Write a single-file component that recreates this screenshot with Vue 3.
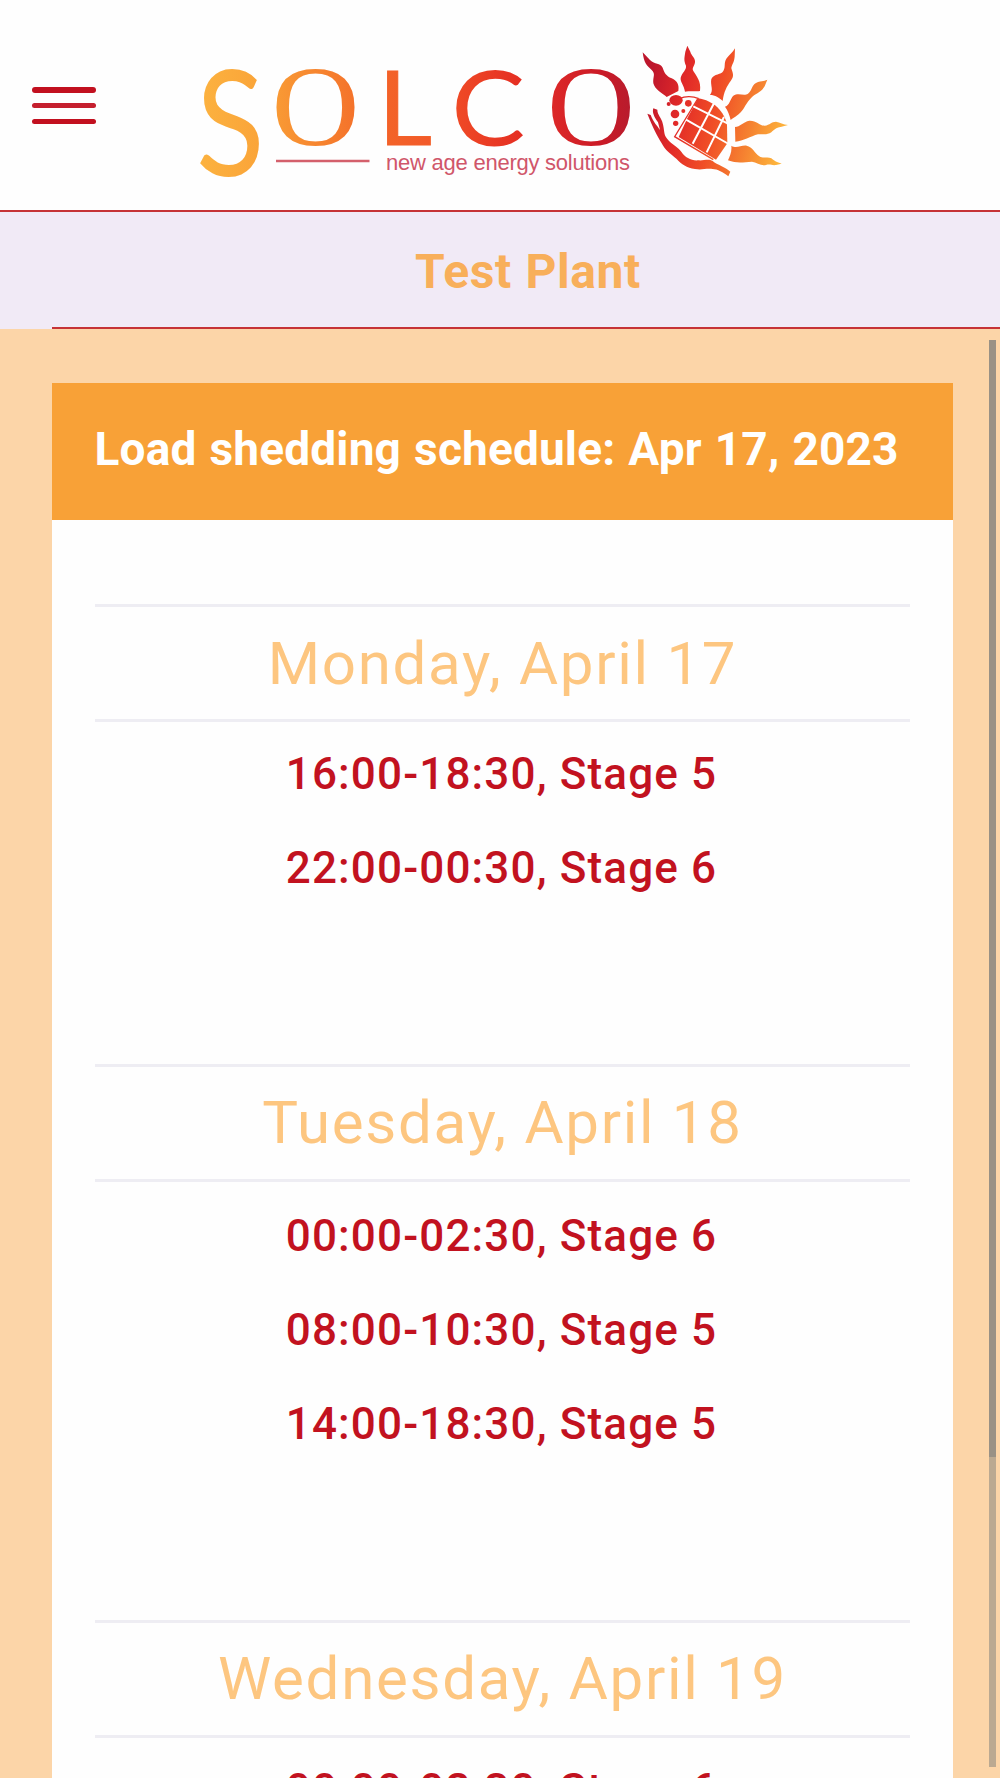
<script setup>
import { ref } from 'vue'

const plantName = ref('Test Plant')
const scheduleDate = ref('Apr 17, 2023')

const days = ref([
  {
    label: 'Monday, April 17',
    slots: ['16:00-18:30, Stage 5', '22:00-00:30, Stage 6']
  },
  {
    label: 'Tuesday, April 18',
    slots: ['00:00-02:30, Stage 6', '08:00-10:30, Stage 5', '14:00-18:30, Stage 5']
  },
  {
    label: 'Wednesday, April 19',
    slots: ['00:00-02:30, Stage 6']
  }
])
</script>

<template>
  <div class="page">
    <header class="topbar">
      <button class="menu" aria-label="Menu">
        <span></span>
        <span></span>
        <span></span>
      </button>

      <svg class="logo" viewBox="190 0 610 209" width="610" height="209">
        <defs>
          <linearGradient id="g-s">
            <stop offset="0" stop-color="#fcb340" />
            <stop offset="1" stop-color="#faa338" />
          </linearGradient>
          <linearGradient id="g-o1">
            <stop offset="0" stop-color="#f99c35" />
            <stop offset="1" stop-color="#f4702a" />
          </linearGradient>
          <linearGradient id="g-l">
            <stop offset="0" stop-color="#f36528" />
            <stop offset="1" stop-color="#f2592a" />
          </linearGradient>
          <linearGradient id="g-c">
            <stop offset="0" stop-color="#f04c26" />
            <stop offset="1" stop-color="#e42c22" />
          </linearGradient>
          <linearGradient id="g-o2">
            <stop offset="0" stop-color="#de2a28" />
            <stop offset="0.6" stop-color="#cb1a26" />
            <stop offset="1" stop-color="#b51c2e" />
          </linearGradient>
          <linearGradient id="g-sun" gradientUnits="userSpaceOnUse" x1="50" y1="170" x2="470" y2="270">
            <stop offset="0" stop-color="#bd162c" />
            <stop offset="0.25" stop-color="#e22a28" />
            <stop offset="0.5" stop-color="#f04e26" />
            <stop offset="0.75" stop-color="#f58030" />
            <stop offset="1" stop-color="#fdb53c" />
          </linearGradient>
        </defs>

        <!-- wordmark -->
        <text class="sans" transform="translate(196 176) scale(0.86 1)" font-size="147" fill="url(#g-s)">S</text>
        <text class="serif" transform="translate(271.5 145.2) scale(1.06 1)" font-size="115" fill="url(#g-o1)">O</text>
        <text class="sans" transform="translate(378 145) scale(1.02 1)" font-size="103" stroke="#f36028" stroke-width="1" fill="url(#g-l)">L</text>
        <text class="sans" transform="translate(451 145.5) scale(1.07 1)" font-size="104" fill="url(#g-c)">C</text>
        <text class="serif" transform="translate(547 145.2) scale(1.06 1)" font-size="115" fill="url(#g-o2)">O</text>
        <line x1="276" y1="161" x2="369.5" y2="161" stroke="#d4606c" stroke-width="2.4" />
        <text class="tagline" x="386" y="169.5" textLength="244">new age energy solutions</text>

        <!-- sun, figure and solar panel -->
        <g transform="translate(630 35) scale(0.33333)" fill="url(#g-sun)">
          <path d="M38 52L60 75C75 90 90 82 98 98C104 115 108 122 125 130C142 138 148 150 145 168L110 186C98 175 75 165 70 145C68 125 78 118 65 105C50 92 42 85 38 52Z" />
          <path d="M172 32L181 50C184 62 194 66 195 78C196 92 184 98 190 108C200 125 214 138 210 168C200 170 175 168 165 170C162 150 150 140 152 128C156 112 170 105 168 92C160 75 164 65 166 50Z" />
          <path d="M315 40L314 65C312 85 304 90 304 100C308 115 314 122 302 138C290 155 282 170 278 198C268 188 255 180 240 180C252 165 240 150 244 132C252 115 274 120 280 108C288 95 280 85 290 70C300 58 308 52 315 40Z" />
          <path d="M412 134L404 154C394 172 374 176 364 188C352 200 350 206 340 222C328 240 314 245 302 255C298 238 294 228 285 215C300 210 300 192 310 182C325 172 342 184 354 176C368 164 364 152 378 144C390 138 400 140 412 134Z" />
          <path d="M474 270L452 276C438 278 432 284 424 292C410 302 396 296 384 298C362 304 340 318 316 320L315 276C330 276 340 260 358 257C380 256 388 272 404 272C420 270 424 260 438 260C450 262 460 268 474 270Z" />
          <path d="M455 386L438 390C426 392 420 386 408 390C394 394 380 382 366 380C340 382 320 386 294 376C300 362 306 350 304 332C320 342 332 330 350 332C368 336 374 354 388 364C400 372 412 364 424 370C434 378 440 382 455 386Z" />
          <path d="M52 236L62 240C70 262 82 272 90 285L84 262C72 245 66 232 70 220L82 224C82 240 96 250 98 265C104 285 100 300 112 312C125 330 145 335 155 352C165 368 185 378 205 376C220 378 235 370 248 378C262 390 285 395 301 410L295 424C280 412 262 402 248 402C225 400 215 406 195 402C170 398 155 388 140 372C120 355 105 345 95 325C80 300 70 280 52 236Z" />
          <ellipse cx="138" cy="196" rx="20" ry="16" />
          <circle cx="175" cy="205" r="10" />
          <circle cx="135" cy="237" r="13" />
          <circle cx="160" cy="228" r="6" />
          <circle cx="137" cy="265" r="8" />
          <circle cx="116" cy="207" r="6" />
          <path d="M204 190C250 196 284 230 291 270L292 325L258 374L146 306L172 250Z" />
          <path d="M150 190C165 183 190 184 204 190L134 305L250 374" fill="none" stroke="url(#g-sun)" stroke-width="4" />
          <g stroke="#fff" stroke-width="6" fill="none">
            <path d="M252 205L188 326M282 246L230 352M190 214L294 266M168 254L296 327" />
          </g>
        </g>
      </svg>
    </header>

    <div class="plant-bar">
      <h1>{{ plantName }}</h1>
    </div>

    <main class="content">
      <section class="card">
        <h2 class="card-title">Load shedding schedule: {{ scheduleDate }}</h2>

        <div v-for="day in days" :key="day.label" class="day">
          <h3>{{ day.label }}</h3>
          <ul>
            <li v-for="slot in day.slots" :key="slot">{{ slot }}</li>
          </ul>
        </div>
      </section>
    </main>

    <div class="scrollbar">
      <div class="thumb"></div>
    </div>
  </div>
</template>

<style>
body {
  margin: 0;
  overflow: hidden;
}
</style>

<style scoped>
.page {
  position: relative;
  width: 1000px;
  height: 1778px;
  overflow: hidden;
  background-color: #fcd5a8;
  font-family: Roboto, sans-serif;
}

.topbar {
  box-sizing: border-box;
  display: flex;
  align-items: flex-start;
  height: 212px;
  background-color: #fefefe;
  border-bottom: 2px solid #c63336;
}

.menu {
  display: flex;
  flex-direction: column;
  gap: 10.6px;
  width: 64px;
  margin: 87.4px 94px 0 32px;
  padding: 0;
  border: none;
  background: none;
}

.menu span {
  height: 5.2px;
  border-radius: 3px;
  background-color: #c2101f;
}

.menu span:nth-child(2) {
  background-color: #c51f2e;
}

.logo {
  flex: none;
}

.serif {
  font-family: "Liberation Serif", serif;
}

.sans {
  font-family: Lato, sans-serif;
}

.tagline {
  font-family: "Liberation Sans", sans-serif;
  font-size: 22px;
  fill: #d0566a;
}

.plant-bar {
  box-sizing: border-box;
  height: 117px;
  padding-left: 52px;
  background-color: #f1eaf6;
}

.plant-bar h1 {
  box-sizing: border-box;
  height: 117px;
  margin: 0;
  padding-left: 4px;
  border-bottom: 2px solid #c63336;
  color: #f8af5a;
  font-size: 48px;
  font-weight: 700;
  line-height: 119px;
  letter-spacing: 0.6px;
  word-spacing: 1px;
  text-align: center;
}

.content {
  padding: 53.5px 47.5px 0 52px;
}

.card {
  height: 1500px;
  background-color: #fefefe;
}

.card-title {
  height: 137px;
  margin: 0 0 84.5px;
  padding-left: 42.5px;
  background-color: #f8a137;
  color: #fff;
  font-size: 46px;
  font-weight: 700;
  line-height: 133px;
  letter-spacing: 0.15px;
  word-spacing: 1.5px;
  white-space: nowrap;
}

.day {
  margin: 0 42.5px 0 43px;
  padding-bottom: 154px;
  text-align: center;
}

.day h3 {
  box-sizing: border-box;
  height: 118px;
  margin: 0;
  border-top: 3px solid #eeedf3;
  border-bottom: 3px solid #eeedf3;
  color: #fdc680;
  font-size: 60px;
  font-weight: 400;
  line-height: 112px;
  letter-spacing: 1.7px;
}

.day:nth-child(2) h3 {
  line-height: 113px;
}

.day ul {
  margin: 0;
  padding: 0 2px 0 0;
  list-style: none;
}

.day:nth-child(3) ul {
  padding-top: 2px;
}

.day li {
  height: 94px;
  color: #c2121f;
  font-size: 44px;
  font-weight: 500;
  line-height: 104px;
  letter-spacing: 1.15px;
}

/* overlay scroll indicator */
.scrollbar {
  position: absolute;
  top: 340px;
  right: 4px;
  width: 7px;
  height: 1427px;
  background-color: #bba991;
}

.thumb {
  height: 1117px;
  background-color: #999185;
}
</style>
